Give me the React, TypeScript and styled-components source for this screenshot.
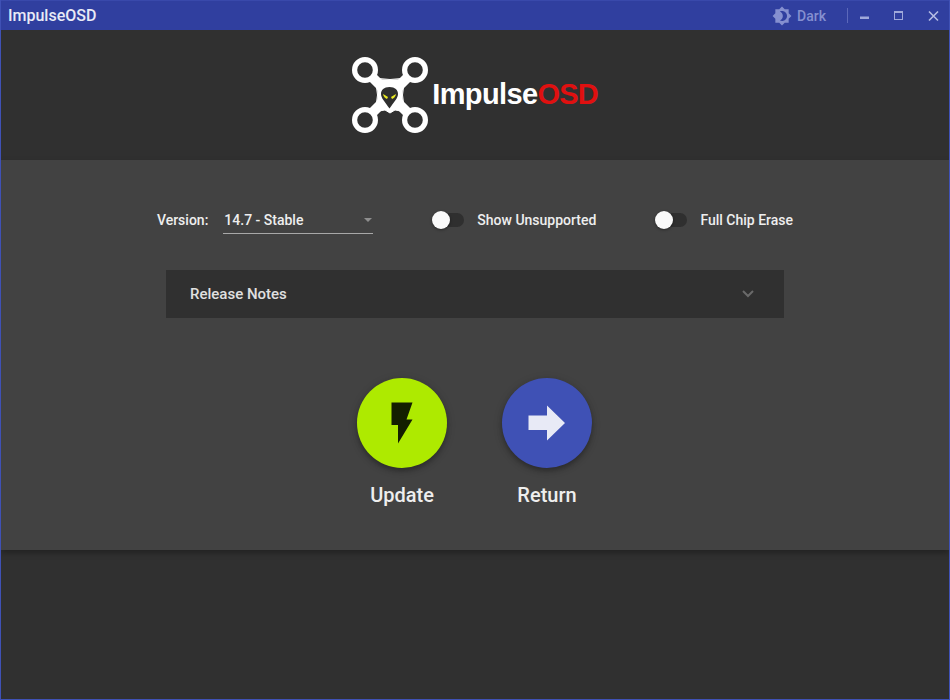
import React from "react";
import styled, { createGlobalStyle } from "styled-components";

const Global = createGlobalStyle`
  html, body { margin: 0; padding: 0; background: #303030; }
  * { box-sizing: border-box; }
`;

const Win = styled.div`
  width: 950px;
  height: 700px;
  border: 1px solid #3f51b5;
  border-top: 0;
  background: #303030;
  font-family: Roboto, "Liberation Sans", sans-serif;
  display: flex;
  flex-direction: column;
  overflow: hidden;
`;

const TitleBar = styled.div`
  height: 30px;
  flex: none;
  background: #303f9f;
  border-top: 1px solid #3949ab;
  display: flex;
  align-items: center;
  padding-left: 7px;
  color: #e8eaf6;
`;

const AppName = styled.div`
  font-size: 16px;
  font-weight: 500;
  flex: 1;
  line-height: 28px;
`;

const ThemeToggle = styled.div`
  display: flex;
  align-items: center;
  gap: 5px;
  color: #8590d0;
  font-size: 14px;
  font-weight: 500;
  width: 75px;
`;

const Divider = styled.div`
  width: 1px;
  height: 15px;
  background: #5c68ba;
`;

const WinButtons = styled.div`
  display: flex;
  align-items: center;
  width: 101px;
  padding-left: 12px;
  gap: 24px;
`;

const Header = styled.header`
  height: 130px;
  flex: none;
  display: flex;
  align-items: center;
  justify-content: center;
`;

const Logo = styled.div`
  display: flex;
  align-items: center;
  gap: 3px;
  height: 80px;
`;

const LogoText = styled.div`
  font-family: "Liberation Sans", Arial, sans-serif;
  font-size: 29px;
  font-weight: 700;
  letter-spacing: -0.6px;
  color: #fff;
  line-height: 30px;
  margin-bottom: 3px;
`;

const LogoAccent = styled.span`
  color: #e01010;
  letter-spacing: -0.9px;
`;

const Panel = styled.main`
  height: 390px;
  flex: none;
  background: #424242;
  box-shadow: 0 3px 6px rgba(0, 0, 0, 0.3);
  display: flex;
  flex-direction: column;
  align-items: center;
  padding-top: 40px;
`;

const Controls = styled.div`
  display: flex;
  align-items: center;
  gap: 59px;
  height: 40px;
`;

const VersionGroup = styled.div`
  display: flex;
  align-items: center;
  gap: 15px;
`;

const FieldLabel = styled.span`
  font-size: 14px;
  font-weight: 500;
  color: #eeeeee;
`;

const Select = styled.div`
  width: 150px;
  height: 27px;
  border-bottom: 1px solid #a8a8a8;
  display: flex;
  align-items: center;
  justify-content: space-between;
  padding: 0 1px 0 1px;
  font-size: 14px;
  font-weight: 500;
  color: #eeeeee;
`;

const Caret = styled.span`
  width: 0;
  height: 0;
  border-left: 4px solid transparent;
  border-right: 4px solid transparent;
  border-top: 4px solid #8e8e8e;
`;

const ToggleGroup = styled.div`
  display: flex;
  align-items: center;
  gap: 13px;
`;

const Track = styled.div`
  width: 32px;
  height: 14px;
  border-radius: 7px;
  background: #2f2f2f;
  position: relative;
`;

const Thumb = styled.span`
  position: absolute;
  left: 0;
  top: -2px;
  width: 18px;
  height: 18px;
  border-radius: 50%;
  background: #fafafa;
  box-shadow: 0 1px 3px rgba(0, 0, 0, 0.4);
`;

const Accordion = styled.div`
  width: 618px;
  height: 48px;
  margin-top: 30px;
  background: #303030;
  display: flex;
  align-items: center;
  justify-content: space-between;
  padding: 0 29px 0 24px;
  font-size: 15px;
  font-weight: 500;
  color: #e0e0e0;
`;

const Actions = styled.div`
  display: flex;
  gap: 55px;
  margin-top: 60px;
  padding-right: 1px;
`;

const Action = styled.div`
  width: 90px;
  display: flex;
  flex-direction: column;
  align-items: center;
  gap: 15px;
`;

const Round = styled.div<{ $bg: string }>`
  width: 90px;
  height: 90px;
  border-radius: 50%;
  background: ${(p) => p.$bg};
  box-shadow: 0 3px 5px rgba(0, 0, 0, 0.25), 0 2px 10px rgba(0, 0, 0, 0.15);
  display: flex;
  align-items: center;
  justify-content: center;
`;

const ActionLabel = styled.div`
  font-size: 20px;
  font-weight: 500;
  color: #eeeeee;
  line-height: 24px;
  white-space: nowrap;
`;

const DroneLogo = () => (
  <svg width="77" height="80" viewBox="0 0 77 80">
    <g fill="none" stroke="#fff">
      <path d="M20 22 L56 58 M56 22 L20 58" strokeWidth="10" />
      <path d="M21 23 Q38 26 55 23 Q46 40 55 57 L43 55 L38 58 L33 55 L21 57 Q30 40 21 23Z" fill="#fff" strokeWidth="1" />
      <circle cx="13" cy="15" r="10.4" strokeWidth="5.2" />
      <circle cx="63" cy="15" r="10.4" strokeWidth="5.2" />
      <circle cx="13" cy="65" r="10.4" strokeWidth="5.2" />
      <circle cx="63" cy="65" r="10.4" strokeWidth="5.2" />
    </g>
    <path d="M37.5 32 C32 32 29 35 29 39 C29 43 33 47 37.5 53.5 C42 47 46 43 46 39 C46 35 43 32 37.5 32Z" fill="#2f2f2f" />
    <path d="M31 39 L36 42 L35 44 C33 43.5 31.5 41.5 31 39Z" fill="#ecec20" />
    <path d="M44 39 L39 42 L40 44 C42 43.5 43.5 41.5 44 39Z" fill="#ecec20" />
  </svg>
);

const Theme = () => (
  <svg width="20" height="20" viewBox="0 0 24 24" fill="#8590d0">
    <path d="M20 8.69V4h-4.69L12 .69 8.69 4H4v4.69L.69 12 4 15.31V20h4.69L12 23.31 15.31 20H20v-4.69L23.31 12 20 8.69zM12 18c-.89 0-1.74-.2-2.5-.55C11.56 16.5 13 14.42 13 12s-1.44-4.5-3.5-5.45C10.26 6.2 11.11 6 12 6c3.31 0 6 2.69 6 6s-2.69 6-6 6z" />
  </svg>
);

const MinIcon = () => (
  <svg width="10" height="12" viewBox="0 0 10 12"><rect x="0" y="6.5" width="9" height="2.5" fill="#9fa8da" /></svg>
);
const MaxIcon = () => (
  <svg width="10" height="12" viewBox="0 0 10 12" fill="none" stroke="#9fa8da">
    <rect x="0.5" y="1.5" width="8" height="8" />
    <rect x="0" y="1" width="9" height="2" fill="#9fa8da" stroke="none" />
  </svg>
);
const CloseIcon = () => (
  <svg width="11" height="12" viewBox="0 0 11 12" stroke="#b5bce3" strokeWidth="1.6" fill="none">
    <path d="M1 1.5 L10 10.5 M10 1.5 L1 10.5" />
  </svg>
);
const Chevron = () => (
  <svg width="14" height="10" viewBox="0 0 14 10" fill="none" stroke="#6a6a6a" strokeWidth="2">
    <path d="M2 2 L7 7 L12 2" />
  </svg>
);
const Bolt = () => (
  <svg width="22" height="42" viewBox="0 0 22 42" fill="#141f00">
    <path d="M0.5 0.5 H21.5 L15.5 17.5 H21.5 L7 41.5 V23 H0.5Z" />
  </svg>
);
const Arrow = () => (
  <svg width="38" height="36" viewBox="0 0 38 36" fill="#e8eaf6">
    <path d="M0.5 10.5 H19 V0.5 L37 18 L19 35.5 V25 H0.5Z" />
  </svg>
);

export default function App() {
  return (
    <Win>
      <Global />
      <TitleBar>
        <AppName>ImpulseOSD</AppName>
        <ThemeToggle><Theme />Dark</ThemeToggle>
        <Divider />
        <WinButtons><MinIcon /><MaxIcon /><CloseIcon /></WinButtons>
      </TitleBar>
      <Header>
        <Logo>
          <DroneLogo />
          <LogoText>Impulse<LogoAccent>OSD</LogoAccent></LogoText>
        </Logo>
      </Header>
      <Panel>
        <Controls>
          <VersionGroup>
            <FieldLabel>Version:</FieldLabel>
            <Select>14.7 - Stable<Caret /></Select>
          </VersionGroup>
          <ToggleGroup>
            <Track><Thumb /></Track>
            <FieldLabel>Show Unsupported</FieldLabel>
          </ToggleGroup>
          <ToggleGroup>
            <Track><Thumb /></Track>
            <FieldLabel>Full Chip Erase</FieldLabel>
          </ToggleGroup>
        </Controls>
        <Accordion>Release Notes<Chevron /></Accordion>
        <Actions>
          <Action>
            <Round $bg="#aeea00"><Bolt /></Round>
            <ActionLabel>Update</ActionLabel>
          </Action>
          <Action>
            <Round $bg="#3f51b5"><Arrow /></Round>
            <ActionLabel>Return</ActionLabel>
          </Action>
        </Actions>
      </Panel>
    </Win>
  );
}
